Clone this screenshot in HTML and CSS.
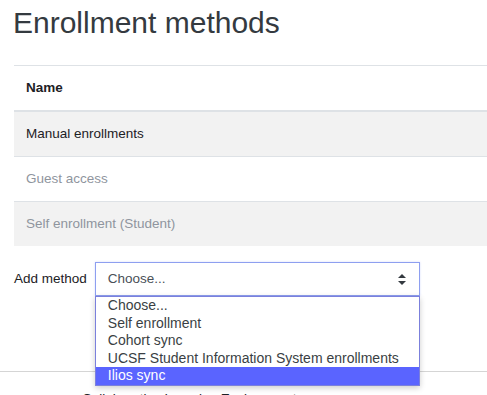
FILE: index.html
```html
<!DOCTYPE html>
<html lang="en">
<head>
    <meta charset="UTF-8">
    <meta name="viewport" content="width=device-width, initial-scale=1.0">
    <title>Enrollment methods</title>
    <link rel="stylesheet" href="styles.css">
</head>
<body>
    <div class="page">
        <h1>Enrollment methods</h1>

        <table class="methods">
            <thead>
                <tr>
                    <th>Name</th>
                </tr>
            </thead>
            <tbody>
                <tr>
                    <td>Manual enrollments</td>
                </tr>
                <tr>
                    <td class="dimmed">Guest access</td>
                </tr>
                <tr>
                    <td class="dimmed">Self enrollment (Student)</td>
                </tr>
            </tbody>
        </table>

        <div class="add-method">
            <label for="method-select">Add method</label>
            <div class="select-wrap">
                <div class="select" id="method-select">
                    <span>Choose...</span>
                    <svg class="select-arrow" width="8" height="11" viewBox="0 0 8 11">
                        <path d="M4 0 L8 4 L0 4 Z" fill="#343a40"/>
                        <path d="M4 11 L8 7 L0 7 Z" fill="#343a40"/>
                    </svg>
                </div>
                <!-- open dropdown list -->
                <ul class="options">
                    <li>Choose...</li>
                    <li>Self enrollment</li>
                    <li>Cohort sync</li>
                    <li>UCSF Student Information System enrollments</li>
                    <li class="selected">Ilios sync</li>
                </ul>
            </div>
        </div>
    </div>

    <div class="footer">
        <p>Collaborative Learning Environment</p>
    </div>
</body>
</html>
```

FILE: styles.css
```css
body {
    margin: 0;
    font-family: "Liberation Sans", Arial, sans-serif;
    font-size: 13.5px;
    line-height: 22px;
    color: #1d2125;
    background-color: #fff;
    overflow: hidden;
}
.page {
    padding-left: 14px;
}
h1 {
    margin: 5px 0 24px -1px;
    font-size: 30px;
    font-weight: 400;
    line-height: 36px;
    color: #343a40;
}
.methods {
    width: 100%;
    border-collapse: collapse;
}
.methods th,
.methods td {
    text-align: left;
    padding: 11px 12px;
    border-top: 1px solid #dee2e6;
}
.methods th {
    font-weight: bold;
    border-bottom: 2px solid #dee2e6;
}
.methods tbody tr:nth-child(odd) {
    background-color: #f2f2f2;
}
.dimmed {
    color: #8f959e;
}
.add-method {
    display: flex;
    align-items: center;
    gap: 8px;
    margin-top: 16px;
    height: 34px;
}
.select-wrap {
    position: relative;
    width: 325px;
}
.select {
    display: flex;
    align-items: center;
    justify-content: space-between;
    height: 32px;
    padding: 0 13px 0 12px;
    border: 1px solid #8e9ff0;
    box-shadow: 0 0 2px rgba(90, 110, 240, 0.25);
    color: #495057;
}
.select-arrow {
    display: block;
}
.options {
    position: absolute;
    top: 34px;
    left: 0;
    width: 323px;
    margin: 0;
    padding: 0;
    list-style: none;
    background-color: #fff;
    border: 1px solid #7b80dc;
    box-shadow: 0 2px 6px rgba(0, 0, 0, 0.2);
    font-size: 14px;
    line-height: 17.6px;
    color: #3a3f44;
    z-index: 2;
}
.options li {
    padding-left: 12px;
}
.options .selected {
    background-color: #5a64ff;
    color: #fff;
}
.footer {
    margin-top: 75px;
    border-top: 1px solid #d5d5d5;
}
.footer p {
    margin: 0;
    padding: 16px 0 0 82px;
    color: #1d2125;
}
```
